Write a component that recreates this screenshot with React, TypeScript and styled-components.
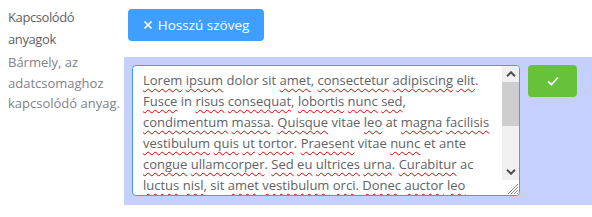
import React from "react";
import styled, { createGlobalStyle } from "styled-components";

const Global = createGlobalStyle`
  html, body { margin: 0; padding: 0; background: #fff; }
  body { font-family: "Open Sans", "Liberation Sans", sans-serif; }
`;

const Page = styled.div`
  display: flex;
  width: 592px;
  height: 217px;
  overflow: hidden;
`;

const LabelCol = styled.div`
  width: 124px;
  flex: none;
  padding: 6px 0 0 8px;
  box-sizing: border-box;
`;

const Title = styled.div`
  font-size: 13px;
  letter-spacing: -0.4px;
  line-height: 22px;
  color: #5f6166;
`;

const Desc = styled.div`
  font-size: 13px;
  line-height: 20.5px;
  color: #808388;
  margin-top: 2px;
`;

const MainCol = styled.div`
  flex: 1;
  display: flex;
  flex-direction: column;
  align-items: flex-start;
`;

const Button = styled.button<{ $tone: "primary" | "success" }>`
  display: inline-flex;
  align-items: center;
  justify-content: center;
  gap: 5px;
  height: 32px;
  border: none;
  border-radius: 4px;
  color: #fff;
  font-family: inherit;
  font-size: 13.5px;
  white-space: nowrap;
  padding: 0;
  cursor: pointer;
  background: ${(p) => (p.$tone === "primary" ? "#409eff" : "#67c23a")};
  width: ${(p) => (p.$tone === "primary" ? "136px" : "49px")};
  flex: none;
`;

const TopButton = styled(Button)`
  margin: 9px 0 0 4px;
`;

const Panel = styled.div`
  align-self: stretch;
  margin-top: 16px;
  background: #c6d0fe;
  padding: 8px 8px 9px 8px;
  display: flex;
  align-items: flex-start;
  gap: 8px;
`;

const Area = styled.div`
  width: 388px;
  height: 131px;
  box-sizing: border-box;
  border: 1px solid #409eff;
  border-radius: 4px;
  background: #fff;
  display: flex;
  overflow: hidden;
  flex: none;
`;

const TextBody = styled.div`
  flex: 1;
  padding: 4px 10px;
  overflow: hidden;
  font-size: 13px;
  line-height: 21px;
  color: #606266;
  white-space: nowrap;
`;

const ScrollBar = styled.div`
  width: 17px;
  flex: none;
  display: flex;
  flex-direction: column;
  background: #f0f0f0;
`;

const Arrow = styled.div`
  height: 16px;
  flex: none;
  display: flex;
  align-items: center;
  justify-content: center;
`;

const Track = styled.div`
  flex: 1;
  display: flex;
  flex-direction: column;
`;

const Thumb = styled.div`
  height: 44px;
  background: #cdcdcd;
`;

const Grip = styled.div`
  height: 15px;
  flex: none;
  background: #fff;
  display: flex;
  align-items: flex-end;
  justify-content: flex-end;
`;

const Line = styled.div``;

const Miss = styled.span`
  text-decoration: underline wavy #e00000;
  text-decoration-thickness: 1px;
  text-underline-offset: 3px;
  text-decoration-skip-ink: none;
`;

const lines: string[] = [
  "*Lorem *ipsum dolor sit *amet, *consectetur *adipiscing *elit.",
  "*Fusce in *risus *consequat, *lobortis *nunc *sed,",
  "*condimentum *massa. *Quisque vitae *leo at *magna *facilisis",
  "*vestibulum *quis *ut *tortor. *Praesent vitae *nunc et ante",
  "*congue *ullamcorper. *Sed *eu *ultrices *urna. *Curabitur ac",
  "*luctus *nisl, sit *amet *vestibulum *orci. *Donec *auctor *leo",
];

function renderLine(l: string, i: number) {
  const tokens = l.split(" ");
  return (
    <Line key={i}>
      {tokens.map((t, j) => {
        const sep = j < tokens.length - 1 ? " " : "";
        if (t.startsWith("*")) {
          const w = t.slice(1);
          const m = w.match(/^(.*?)([.,]?)$/)!;
          return (
            <React.Fragment key={j}>
              <Miss>{m[1]}</Miss>
              {m[2]}
              {sep}
            </React.Fragment>
          );
        }
        return <React.Fragment key={j}>{t + sep}</React.Fragment>;
      })}
    </Line>
  );
}

const XIcon = () => (
  <svg width="10" height="10" viewBox="0 0 10 10">
    <path d="M1.5 1.5 L8.5 8.5 M8.5 1.5 L1.5 8.5" stroke="#fff" strokeWidth="1.7" />
  </svg>
);

const CheckIcon = () => (
  <svg width="14" height="12" viewBox="0 0 14 12">
    <path d="M2 6.5 L5.5 9.5 L12 2.5" fill="none" stroke="#fff" strokeWidth="1.8" />
  </svg>
);

const Chevron = ({ up }: { up?: boolean }) => (
  <svg width="10" height="6" viewBox="0 0 10 6">
    <path
      d={up ? "M1 5.2 L5 1.2 L9 5.2" : "M1 0.8 L5 4.8 L9 0.8"}
      fill="none"
      stroke="#505050"
      strokeWidth="2"
    />
  </svg>
);

const GripIcon = () => (
  <svg width="14" height="14" viewBox="0 0 14 14">
    <path
      d="M13 3 L3 13 M13 6 L6 13 M13 9 L9 13 M13 12 L12 13"
      stroke="#8a8a8a"
      strokeWidth="1"
    />
  </svg>
);

export default function App() {
  return (
    <>
      <Global />
      <Page>
        <LabelCol>
          <Title>
            Kapcsolódó
            <br />
            anyagok
          </Title>
          <Desc>
            Bármely, az
            <br />
            adatcsomaghoz
            <br />
            kapcsolódó anyag.
          </Desc>
        </LabelCol>
        <MainCol>
          <TopButton $tone="primary">
            <XIcon />
            Hosszú szöveg
          </TopButton>
          <Panel>
            <Area>
              <TextBody>{lines.map(renderLine)}</TextBody>
              <ScrollBar>
                <Arrow>
                  <Chevron up />
                </Arrow>
                <Track>
                  <Thumb />
                </Track>
                <Arrow>
                  <Chevron />
                </Arrow>
                <Grip>
                  <GripIcon />
                </Grip>
              </ScrollBar>
            </Area>
            <Button $tone="success">
              <CheckIcon />
            </Button>
          </Panel>
        </MainCol>
      </Page>
    </>
  );
}
